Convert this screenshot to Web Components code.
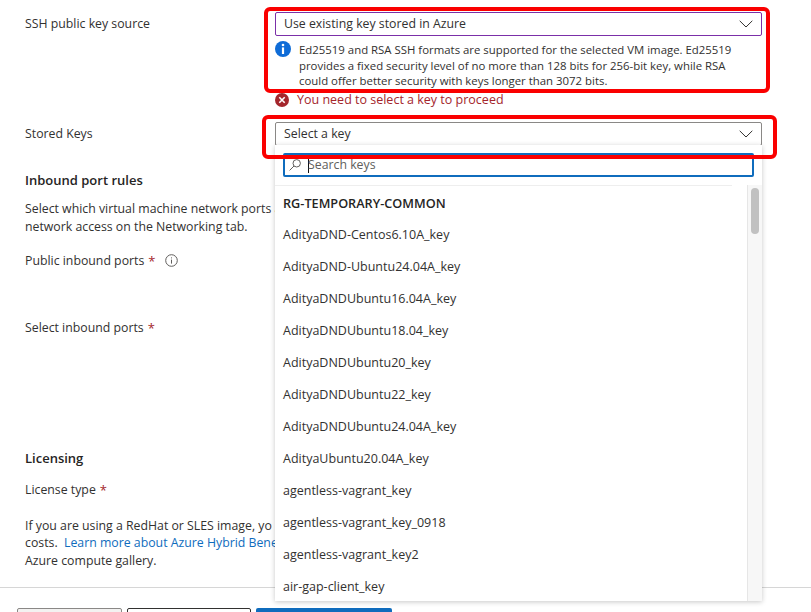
<!DOCTYPE html>
<html>
<head>
<meta charset="utf-8">
<style>
  html, body { margin: 0; padding: 0; background: #fff; }
  body { font-family: "Open Sans", "Noto Sans", sans-serif; font-size: 12.3px; color: #323130; }
</style>
</head>
<body>
<az-page></az-page>
<script>
const chevron = `<svg width="14" height="8" viewBox="0 0 14 8" fill="none" stroke="#323130" stroke-width="1"><path d="M.7.8 7 7 13.3.8"/></svg>`;

class AzSelect extends HTMLElement {
  static get observedAttributes() { return ["value", "accent"]; }
  connectedCallback() { this.render(); }
  attributeChangedCallback() { this.render(); }
  render() {
    if (!this.shadowRoot) this.attachShadow({ mode: "open" });
    const accent = this.getAttribute("accent") || "#8a8886";
    this.shadowRoot.innerHTML = `
    <style>
      :host { display: block; }
      .box {
        display: flex; align-items: center; justify-content: space-between;
        box-sizing: border-box; height: 24px; padding: 0 8px;
        border: 1px solid ${accent}; border-radius: 2px; background: #fff;
      }
    </style>
    <div class="box"><span>${this.getAttribute("value") || ""}</span>${chevron}</div>`;
  }
}
customElements.define("az-select", AzSelect);

class AzInfo extends HTMLElement {
  constructor() {
    super();
    this.attachShadow({ mode: "open" }).innerHTML = `
    <style>
      :host { display: flex; gap: 8px; line-height: 15.5px; font-size: 11.4px; }
      svg { flex: none; }
      div { width: 450px; padding-top: 1px; white-space: nowrap; }
    </style>
    <svg width="16" height="16" viewBox="0 0 16 16"><circle cx="8" cy="8" r="8" fill="#0f6cd7"/><circle cx="8" cy="4" r="1.3" fill="#fff"/><rect x="6.9" y="6.4" width="2.2" height="6.6" fill="#fff"/></svg>
    <div><slot></slot></div>`;
  }
}
customElements.define("az-info", AzInfo);

class AzError extends HTMLElement {
  constructor() {
    super();
    this.attachShadow({ mode: "open" }).innerHTML = `
    <style>
      :host { display: flex; align-items: center; gap: 8px; height: 16px; color: #a4262c; font-size: 12.5px; }
    </style>
    <svg width="14" height="14" viewBox="0 0 14 14"><circle cx="7" cy="7" r="7" fill="#a4262c"/><path d="M4.3 4.3l5.4 5.4M9.7 4.3 4.3 9.7" stroke="#fff" stroke-width="1.6"/></svg>
    <span><slot></slot></span>`;
  }
}
customElements.define("az-error", AzError);

class AzLabel extends HTMLElement {
  connectedCallback() {
    if (this.shadowRoot) return;
    const req = this.hasAttribute("required") ? `<b>*</b>` : "";
    const tip = this.hasAttribute("tip")
      ? `<svg width="13" height="13" viewBox="0 0 13 13" fill="none" stroke="#605e5c"><circle cx="6.5" cy="6.5" r="5.8"/><path d="M6.5 5.6v4M6.5 3.4v1"/></svg>` : "";
    this.attachShadow({ mode: "open" }).innerHTML = `
    <style>
      :host { display: flex; align-items: center; height: 18px; }
      b { font-weight: 400; color: #a4262c; margin-left: 4px; font-size: 13px; }
      svg { margin-left: 10px; }
    </style>
    <span><slot></slot></span>${req}${tip}`;
  }
}
customElements.define("az-label", AzLabel);

class AzRow extends HTMLElement {
  constructor() {
    super();
    this.attachShadow({ mode: "open" }).innerHTML = `
    <style>
      :host { display: grid; grid-template-columns: 250px 487px; }
    </style>
    <div><slot name="label"></slot></div>
    <div><slot></slot></div>`;
  }
}
customElements.define("az-row", AzRow);

class AzSection extends HTMLElement {
  connectedCallback() {
    if (this.shadowRoot) return;
    this.attachShadow({ mode: "open" }).innerHTML = `
    <style>
      :host { display: block; }
      h2 { margin: 0; font-size: 13px; font-weight: 600; line-height: 18px; color: #252423; }
    </style>
    <h2>${this.getAttribute("heading")}</h2>
    <slot></slot>`;
  }
}
customElements.define("az-section", AzSection);

class AzButton extends HTMLElement {
  connectedCallback() {
    if (this.shadowRoot) return;
    this.attachShadow({ mode: "open" }).innerHTML = `
    <style>
      :host { display: block; width: ${this.getAttribute("width")}px; height: 24px; box-sizing: border-box; border-radius: 2px; }
      :host([kind=muted]) { background: #f3f2f1; border: 1px solid #8a8886; }
      :host([kind=plain]) { background: #fff; border: 1px solid #323130; }
      :host([kind=primary]) { background: #0f6cbd; }
    </style>`;
  }
}
customElements.define("az-button", AzButton);

class AzOption extends HTMLElement {
  constructor() {
    super();
    this.attachShadow({ mode: "open" }).innerHTML = `
    <style>
      :host { display: flex; align-items: center; height: 32px; padding-left: 8px; white-space: nowrap; font-size: 12.5px; }
      :host([group]) { font-weight: 600; font-size: 12.7px; color: #252423; }
    </style>
    <slot></slot>`;
  }
}
customElements.define("az-option", AzOption);

class AzDropdown extends HTMLElement {
  constructor() {
    super();
    this.attachShadow({ mode: "open" }).innerHTML = `
    <style>
      :host {
        display: flex; flex-direction: column; position: absolute; left: 275px; top: 145px;
        width: 487px; height: 456px; background: #fff; overflow: hidden;
        box-shadow: 0 1px 5px rgba(0,0,0,.22);
      }
      .search {
        display: flex; align-items: center; box-sizing: border-box;
        height: 24px; margin: 8px; width: 471px; padding-left: 4px;
        border: 2px solid #0f6cbd; border-radius: 2px; color: #605e5c;
      }
      .search svg { margin-right: 7px; }
      .caret { width: 1px; height: 15px; background: #111; margin-right: -1px; }
      .body { flex: 1; display: grid; grid-template-columns: 1fr 15px; min-height: 0; }
      .list { border-top: 1px solid #eee; margin-right: 15px; padding-top: 1px; overflow: hidden; }
      .track { background: #f7f7f7; border-left: 1px solid #e6e6e6; padding: 3px 3px 0 3px; }
      .thumb { height: 46px; background: #c1c1c1; border-radius: 4px; }
    </style>
    <div class="search">
      <svg width="12" height="12" viewBox="0 0 12 12" fill="none" stroke="#605e5c"><circle cx="7.7" cy="4.3" r="3.7"/><path d="M5 7 .6 11.4"/></svg>
      <span class="caret"></span><span>Search keys</span>
    </div>
    <div class="body">
      <div class="list"><slot></slot></div>
      <div class="track"><div class="thumb"></div></div>
    </div>`;
  }
}
customElements.define("az-dropdown", AzDropdown);

class AzHighlight extends HTMLElement {
  connectedCallback() {
    if (this.shadowRoot) return;
    const [x, y, w, h] = this.getAttribute("rect").split(",");
    this.attachShadow({ mode: "open" }).innerHTML = `
    <style>
      :host {
        position: absolute; left: ${x}px; top: ${y}px; width: ${w}px; height: ${h}px;
        box-sizing: border-box; border: 4px solid #fa0000; border-radius: 6px; pointer-events: none;
      }
    </style>`;
  }
}
customElements.define("az-highlight", AzHighlight);

class AzPage extends HTMLElement {
  constructor() {
    super();
    const keys = ["AdityaDND-Centos6.10A_key", "AdityaDND-Ubuntu24.04A_key", "AdityaDNDUbuntu16.04A_key",
      "AdityaDNDUbuntu18.04_key", "AdityaDNDUbuntu20_key", "AdityaDNDUbuntu22_key", "AdityaDNDUbuntu24.04A_key",
      "AdityaUbuntu20.04A_key", "agentless-vagrant_key", "agentless-vagrant_key_0918", "agentless-vagrant_key2",
      "air-gap-client_key"];
    this.attachShadow({ mode: "open" }).innerHTML = `
    <style>
      :host { display: block; position: relative; width: 811px; height: 612px; overflow: hidden; line-height: 18px; }
      .form { padding: 12px 0 0 25px; height: 587px; box-sizing: border-box; }
      az-row az-label { height: 24px; }
      .stored { margin-top: 14px; }
      .inbound { margin-top: 25px; }
      p { margin: 0; white-space: nowrap; }
      .inbound p { margin-top: 11px; }
      .public { margin-top: 16px; }
      .ports { margin-top: 49px; }
      .licensing { margin-top: 112px; }
      .license { margin-top: 14px; }
      .licensing p { margin-top: 18px; line-height: 17.5px; }
      a { color: #0f6cbd; text-decoration: none; }
      az-info { margin-top: 5px; }
      az-error { margin-top: 3px; }
      footer { display: flex; gap: 5px; border-top: 1px solid #d6d6d6; padding: 20px 0 0 17px; }
    </style>
    <div class="form">
      <az-row class="first">
        <az-label slot="label">SSH public key source</az-label>
        <az-select value="Use existing key stored in Azure" accent="#7b2fa8"></az-select>
        <az-info>Ed25519 and RSA SSH formats are supported for the selected VM image. Ed25519<br>provides a fixed security level of no more than 128 bits for 256-bit key, while RSA<br>could offer better security with keys longer than 3072 bits.</az-info>
        <az-error>You need to select a key to proceed</az-error>
      </az-row>
      <az-row class="stored">
        <az-label slot="label">Stored Keys</az-label>
        <az-select value="Select a key"></az-select>
      </az-row>
      <az-section class="inbound" heading="Inbound port rules">
        <p>Select which virtual machine network ports a<br>network access on the Networking tab.</p>
        <az-label class="public" required tip>Public inbound ports</az-label>
        <az-label class="ports" required>Select inbound ports</az-label>
      </az-section>
      <az-section class="licensing" heading="Licensing">
        <az-label class="license" required>License type</az-label>
        <p>If you are using a RedHat or SLES image, yo<br>costs.&nbsp; <a>Learn more about Azure Hybrid Bene</a><br>Azure compute gallery.</p>
      </az-section>
    </div>
    <footer>
      <az-button kind="muted" width="105"></az-button>
      <az-button kind="plain" width="124"></az-button>
      <az-button kind="primary" width="136"></az-button>
    </footer>
    <az-dropdown>
      <az-option group>RG-TEMPORARY-COMMON</az-option>
      ${keys.map(k => `<az-option>${k}</az-option>`).join("")}
    </az-dropdown>
    <az-highlight rect="264,7,506,86"></az-highlight>
    <az-highlight rect="262,115,515,44"></az-highlight>`;
  }
}
customElements.define("az-page", AzPage);
</script>
</body>
</html>
